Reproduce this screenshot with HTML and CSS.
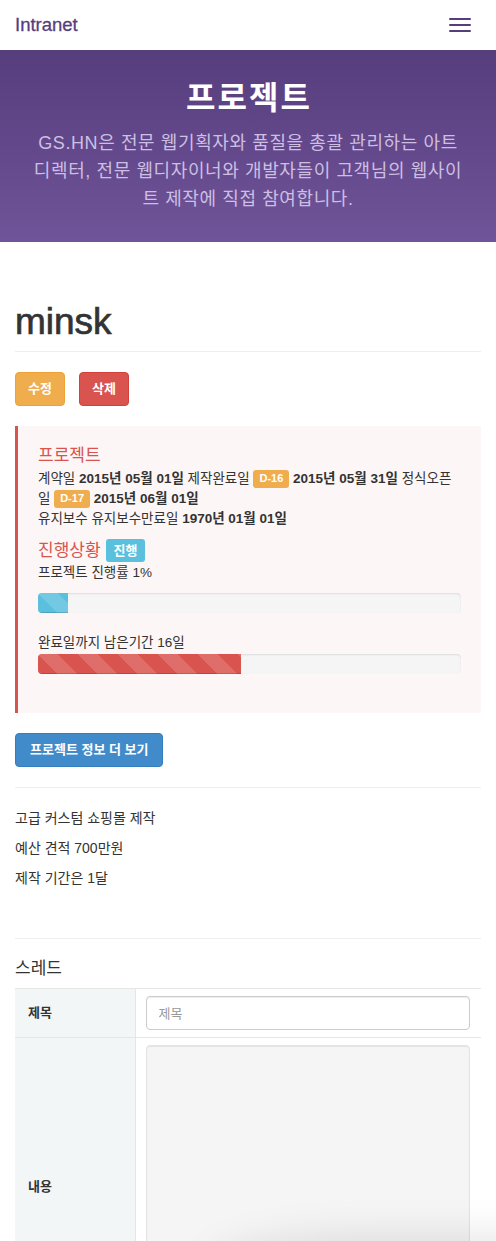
FILE: index.html
```html
<!DOCTYPE html>
<html lang="ko">
<head>
<meta charset="utf-8">
<title>minsk - 프로젝트</title>
<link rel="stylesheet" href="styles.css">
</head>
<body>
<nav class="navbar">
  <a class="brand" href="#">Intranet</a>
  <button class="toggle" type="button" aria-label="메뉴">
    <span class="bar"></span><span class="bar"></span><span class="bar"></span>
  </button>
</nav>
<header class="hero">
  <h1 class="hero-title">프로젝트</h1>
  <p class="hero-lead">GS.HN은 전문 웹기획자와 품질을 총괄 관리하는 아트 디렉터, 전문 웹디자이너와 개발자들이 고객님의 웹사이트 제작에 직접 참여합니다.</p>
</header>
<main class="container">
  <div class="page-header"><h1>minsk</h1></div>
  <div class="actions">
    <a class="btn btn-warning" href="#">수정</a>
    <a class="btn btn-danger" href="#">삭제</a>
  </div>
  <section class="callout">
    <h4 class="callout-title">프로젝트</h4>
    <p class="callout-text">
      <span class="line">계약일 <b>2015년 05월 01일</b> 제작완료일 <span class="label label-warning">D-16</span> <b>2015년 05월 31일</b> 정식오픈</span>
      <span class="line">일 <span class="label label-warning">D-17</span> <b>2015년 06월 01일</b></span>
      <span class="line">유지보수 유지보수만료일 <b>1970년 01월 01일</b></span>
    </p>
    <h4 class="callout-title status">진행상황 <span class="label label-info">진행</span></h4>
    <p class="progress-caption">프로젝트 진행률 1%</p>
    <div class="progress"><div class="progress-bar bar-info" style="width: 7.1%"></div></div>
    <p class="progress-caption tight">완료일까지 남은기간 16일</p>
    <div class="progress"><div class="progress-bar bar-danger" style="width: 48.1%"></div></div>
  </section>
  <a class="btn btn-primary" href="#">프로젝트 정보 더 보기</a>
  <hr class="divider">
  <div class="desc">
    <p>고급 커스텀 쇼핑몰 제작</p>
    <p>예산 견적 700만원</p>
    <p>제작 기간은 1달</p>
  </div>
  <hr class="divider">
  <h4 class="thread-title">스레드</h4>
  <table class="thread-form">
    <colgroup><col class="col-label"><col></colgroup>
    <tr>
      <th>제목</th>
      <td><input class="field" type="text" placeholder="제목"></td>
    </tr>
    <tr>
      <th>내용</th>
      <td><textarea class="field area"></textarea></td>
    </tr>
  </table>
</main>
<div class="dock-shadow"></div>
</body>
</html>
```

FILE: styles.css
```css
* { box-sizing: border-box; }

html, body {
  margin: 0;
  padding: 0;
}

body {
  font-family: "Liberation Sans", "Noto Sans CJK KR", sans-serif;
  font-size: 14px;
  line-height: 20px;
  color: #333;
  background: #fff;
  overflow: hidden;
}

/* navbar */
.navbar {
  height: 50px;
  display: flex;
  align-items: center;
  justify-content: space-between;
  padding: 0 15px;
  background: #fff;
}

.brand {
  font-size: 18.5px;
  line-height: 20px;
  color: #563d7c;
  text-decoration: none;
  -webkit-text-stroke: 0.3px #563d7c;
}

.toggle {
  display: flex;
  flex-direction: column;
  gap: 4px;
  padding: 9px 10px;
  border: 0;
  background: transparent;
}

.bar {
  display: block;
  width: 22px;
  height: 2px;
  background: #563d7c;
  border-radius: 1px;
}

/* hero */
.hero {
  background: linear-gradient(to bottom, #563d7c 0%, #6f5499 100%);
  padding: 31px 30px 29px;
  text-align: center;
  color: #fff;
}

.hero-title {
  margin: 0;
  font-size: 32px;
  line-height: 34px;
  font-weight: 700;
  letter-spacing: 2px;
  text-indent: 2px;
  color: #fff;
}

.hero-lead {
  margin: 14px 0 0;
  font-size: 18px;
  line-height: 28px;
  letter-spacing: 0.6px;
  color: #cdbfe3;
}

/* content */
.container {
  padding: 0 15px;
}

.page-header {
  margin: 60px 0 20px;
  padding-bottom: 9px;
  border-bottom: 1px solid #eee;
}

.page-header h1 {
  margin: 0;
  font-size: 37px;
  line-height: 40px;
  font-weight: 500;
  color: #333;
  -webkit-text-stroke: 0.7px #333;
}

.actions {
  display: flex;
  gap: 14px;
}

.btn {
  display: inline-block;
  padding: 6px 12px;
  font-size: 13px;
  font-weight: 700;
  line-height: 20px;
  color: #fff;
  text-decoration: none;
  border: 1px solid transparent;
  border-radius: 4px;
}

.btn-warning { background: #f0ad4e; border-color: #eea236; }
.btn-danger { background: #d9534f; border-color: #d43f3a; }
.btn-primary { background: #428bca; border-color: #357ebd; padding: 6px 14px; }

/* callout */
.callout {
  margin: 20px 0;
  padding: 20px;
  border-left: 3px solid #d9534f;
  background: #fcf6f6;
  font-size: 13.5px;
  line-height: 20px;
}

.callout p {
  margin: 0;
}

.callout-text .line {
  display: block;
  height: 20px;
  white-space: nowrap;
}

.callout-title {
  margin: 0 0 3px;
  font-size: 17px;
  line-height: 20px;
  font-weight: 400;
  color: #d9534f;
}

.callout-title.status {
  margin: 10px 0 1px;
  display: flex;
  align-items: center;
  gap: 5px;
}

.label {
  display: inline-block;
  padding: 3px 6px 4px;
  font-size: 11px;
  font-weight: 700;
  line-height: 11px;
  color: #fff;
  border-radius: 3px;
  vertical-align: 1px;
}

.label-warning { background: #f0ad4e; }

.label-info {
  background: #5bc0de;
  font-size: 13px;
  line-height: 13px;
  padding: 5px 8px;
  border-radius: 3px;
}

.progress-caption {
  margin-bottom: 10px !important;
}

.progress-caption.tight {
  margin-bottom: 1px !important;
}

.progress {
  height: 20px;
  margin-bottom: 20px;
  background: #f5f5f5;
  border-radius: 4px;
  box-shadow: inset 0 1px 2px rgba(0, 0, 0, 0.1);
  overflow: hidden;
}

.progress:last-child {
  margin-bottom: 19px;
}

.progress-bar {
  height: 100%;
  box-shadow: inset 0 -1px 0 rgba(0, 0, 0, 0.15);
  background-image: linear-gradient(45deg,
    rgba(255, 255, 255, 0.15) 25%, transparent 25%,
    transparent 50%, rgba(255, 255, 255, 0.15) 50%,
    rgba(255, 255, 255, 0.15) 75%, transparent 75%, transparent);
  background-size: 40px 40px;
}

.bar-info { background-color: #5bc0de; }
.bar-danger { background-color: #d9534f; }

/* divider + description */
.divider {
  height: 0;
  margin: 20px 0;
  border: 0;
  border-top: 1px solid #eee;
}

.desc {
  margin-bottom: 50px;
}

.desc p {
  margin: 0 0 10px;
}

/* thread */
.thread-title {
  margin: 0 0 9px;
  font-size: 17px;
  line-height: 20px;
  font-weight: 400;
  color: #333;
}

.thread-form {
  width: 100%;
  border-collapse: collapse;
  table-layout: fixed;
}

.col-label { width: 120px; }

.thread-form tr {
  border-top: 1px solid #e6e6e6;
}

.thread-form th {
  padding: 7px 13px;
  text-align: left;
  font-size: 13px;
  font-weight: 700;
  background: #f3f6f7;
  border-right: 1px solid #e6e6e6;
  vertical-align: middle;
}

.thread-form td {
  padding: 7px 11px 7px 10px;
}

.field {
  display: block;
  width: 100%;
  height: 34px;
  padding: 6px 12px;
  font-family: inherit;
  font-size: 13px;
  line-height: 20px;
  color: #555;
  background: #fff;
  border: 1px solid #ccc;
  border-radius: 4px;
  box-shadow: inset 0 1px 1px rgba(0, 0, 0, 0.075);
}

.field::placeholder { color: #999; }

.field.area {
  height: 284px;
  resize: none;
  background: #f5f5f5;
  border-color: #e3e3e3;
}

/* shadow of a docked element just below the viewport */
.dock-shadow {
  position: fixed;
  left: 210px;
  right: -40px;
  bottom: -70px;
  height: 70px;
  border-radius: 50% 0 0 0;
  box-shadow: 0 -6px 40px rgba(0, 0, 0, 0.1);
  background: #ddd;
}
```
